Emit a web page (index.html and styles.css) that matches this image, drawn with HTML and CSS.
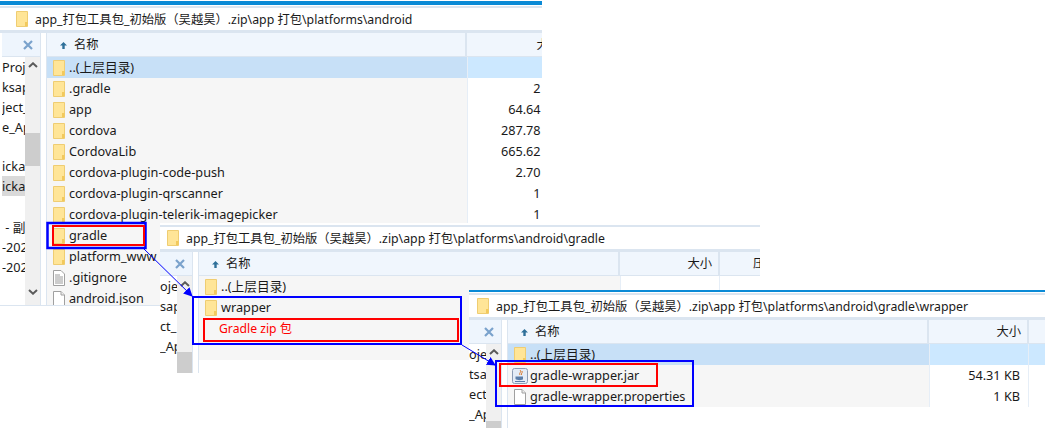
FILE: index.html
```html
<!DOCTYPE html>
<html lang="en">
<head>
    <meta charset="UTF-8">
    <title>Gradle wrapper</title>
    <link rel="stylesheet" href="styles.css">
</head>
<body>
    <svg class="defs" width="0" height="0">
        <symbol id="folder" viewBox="0 0 12 16">
            <path d="M.5.5H11.5V15.5H.5Z" fill="#ffe597" stroke="#efcd72"/>
            <path d="M9 15V11H11.5V15Z" fill="#f2c95c"/>
        </symbol>
        <symbol id="doc" viewBox="0 0 12 16">
            <path d="M.5.5H8L11.5 4V15.5H.5Z" fill="#fff" stroke="#a0a0a0"/>
            <path d="M8 .5V4H11.5" fill="#eee" stroke="#a0a0a0"/>
        </symbol>
        <symbol id="textdoc" viewBox="0 0 12 16">
            <path d="M.5.5H8L11.5 4V15.5H.5Z" fill="#fff" stroke="#a0a0a0"/>
            <path d="M2 5H7M2 7H10M2 9H10M2 11H10M2 13H10" stroke="#9a9a9a"/>
        </symbol>
        <symbol id="jar" viewBox="0 0 16 16">
            <rect x=".5" y=".5" width="15" height="15" rx="2" fill="#e4ecf6" stroke="#8c9cb4"/>
            <path d="M8 2C10 4 6.500 5 8 7M10 3C11 5 8.500 5.500 9.500 7" fill="none" stroke="#d9782a"/>
            <path d="M3.500 8.500H11V11C11 12.500 4.500 12.500 3.500 11Z" fill="#5c7ea8"/>
            <path d="M3 13.500H13" stroke="#5c7ea8"/>
        </symbol>
        <symbol id="cross" viewBox="0 0 10 10">
            <path d="M1 1L9 9M9 1L1 9" fill="none" stroke="#7aa2cc" stroke-width="2.200"/>
        </symbol>
        <symbol id="chevron" viewBox="0 0 10 6">
            <path d="M1 5L5 1.300L9 5" fill="none" stroke="#5a5a5a" stroke-width="2"/>
        </symbol>
        <symbol id="sort" viewBox="0 0 7 7">
            <path d="M3.500 0L7 3.500H4.700V7H2.300V3.500H0Z" fill="#2f7099"/>
        </symbol>
    </svg>

    <div class="window win-root">
        <div class="title-bar"></div>
        <div class="address">
            <svg class="address-icon"><use href="#folder"/></svg>
            <span>app_打包工具包_初始版（吴越昊）.zip\app 打包\platforms\android</span>
        </div>
        <div class="body">
            <div class="pane">
                <div class="pane-head"><svg class="close"><use href="#cross"/></svg></div>
                <div class="pane-main">
                    <div class="tree">
                        <div class="tree-line">Proje</div>
                        <div class="tree-line">ksap</div>
                        <div class="tree-line">ject_</div>
                        <div class="tree-line">e_Ap</div>
                        <div class="tree-line tree-gap">icka</div>
                        <div class="tree-line current">icka</div>
                        <div class="tree-line tree-gap2">&nbsp;- 副</div>
                        <div class="tree-line">-202</div>
                        <div class="tree-line">-202</div>
                    </div>
                    <div class="scrollbar scroll-root">
                        <svg class="chev"><use href="#chevron"/></svg>
                        <div class="thumb"></div>
                        <svg class="chev down"><use href="#chevron"/></svg>
                    </div>
                </div>
            </div>
            <div class="main">
                <div class="head">
                    <div class="head-name"><svg class="sort"><use href="#sort"/></svg>名称</div>
                    <div class="head-size">大小</div>
                </div>
                <div class="row selected"><div class="name"><svg class="icon"><use href="#folder"/></svg>..(上层目录)</div><div class="size"></div></div>
                <div class="row"><div class="name"><svg class="icon"><use href="#folder"/></svg>.gradle</div><div class="size">2 KB</div></div>
                <div class="row"><div class="name"><svg class="icon"><use href="#folder"/></svg>app</div><div class="size">64.64 KB</div></div>
                <div class="row"><div class="name"><svg class="icon"><use href="#folder"/></svg>cordova</div><div class="size">287.78 KB</div></div>
                <div class="row"><div class="name"><svg class="icon"><use href="#folder"/></svg>CordovaLib</div><div class="size">665.62 KB</div></div>
                <div class="row"><div class="name"><svg class="icon"><use href="#folder"/></svg>cordova-plugin-code-push</div><div class="size">2.70 KB</div></div>
                <div class="row"><div class="name"><svg class="icon"><use href="#folder"/></svg>cordova-plugin-qrscanner</div><div class="size">1 KB</div></div>
                <div class="row"><div class="name"><svg class="icon"><use href="#folder"/></svg>cordova-plugin-telerik-imagepicker</div><div class="size">1 KB</div></div>
                <div class="row"><div class="name"><svg class="icon"><use href="#folder"/></svg>gradle</div><div class="size"></div></div>
                <div class="row"><div class="name"><svg class="icon"><use href="#folder"/></svg>platform_www</div><div class="size"></div></div>
                <div class="row"><div class="name"><svg class="icon"><use href="#textdoc"/></svg>.gitignore</div><div class="size"></div></div>
                <div class="row"><div class="name"><svg class="icon"><use href="#doc"/></svg>android.json</div><div class="size"></div></div>
            </div>
        </div>
    </div>

    <div class="window win-gradle">
        <div class="address">
            <svg class="address-icon"><use href="#folder"/></svg>
            <span>app_打包工具包_初始版（吴越昊）.zip\app 打包\platforms\android\gradle</span>
        </div>
        <div class="body">
            <div class="pane">
                <div class="pane-head"><svg class="close"><use href="#cross"/></svg></div>
                <div class="pane-main">
                    <div class="tree">
                        <div class="tree-line">oje</div>
                        <div class="tree-line">sap</div>
                        <div class="tree-line">ct_</div>
                        <div class="tree-line">_Ap</div>
                    </div>
                    <div class="scrollbar scroll-gradle">
                        <svg class="chev"><use href="#chevron"/></svg>
                        <div class="thumb"></div>
                    </div>
                </div>
            </div>
            <div class="main">
                <div class="head">
                    <div class="head-name"><svg class="sort"><use href="#sort"/></svg>名称</div>
                    <div class="head-size">大小</div>
                    <div class="head-more">压缩</div>
                </div>
                <div class="row"><div class="name"><svg class="icon"><use href="#folder"/></svg>..(上层目录)</div><div class="size"></div><div class="more"></div></div>
                <div class="row"><div class="name"><svg class="icon"><use href="#folder"/></svg>wrapper</div><div class="size"></div><div class="more"></div></div>
                <div class="row"><div class="name note">Gradle zip 包</div><div class="size"></div><div class="more"></div></div>
                <div class="row"><div class="name"></div><div class="size"></div><div class="more"></div></div>
            </div>
        </div>
    </div>

    <div class="window win-wrapper">
        <div class="title-bar thin"></div>
        <div class="address">
            <svg class="address-icon"><use href="#folder"/></svg>
            <span>app_打包工具包_初始版（吴越昊）.zip\app 打包\platforms\android\gradle\wrapper</span>
        </div>
        <div class="body">
            <div class="pane">
                <div class="pane-head"><svg class="close"><use href="#cross"/></svg></div>
                <div class="pane-main">
                    <div class="tree">
                        <div class="tree-line">oje</div>
                        <div class="tree-line">tsap</div>
                        <div class="tree-line">ect_</div>
                        <div class="tree-line">_Ap</div>
                    </div>
                    <div class="scrollbar scroll-wrapper">
                        <svg class="chev"><use href="#chevron"/></svg>
                        <div class="thumb"></div>
                    </div>
                </div>
            </div>
            <div class="main">
                <div class="head">
                    <div class="head-name"><svg class="sort"><use href="#sort"/></svg>名称</div>
                    <div class="head-size">大小</div>
                    <div class="head-more"></div>
                </div>
                <div class="row selected"><div class="name"><svg class="icon"><use href="#folder"/></svg>..(上层目录)</div><div class="size"></div><div class="more"></div></div>
                <div class="row"><div class="name"><svg class="icon-jar"><use href="#jar"/></svg>gradle-wrapper.jar</div><div class="size">54.31 KB</div><div class="more"></div></div>
                <div class="row"><div class="name"><svg class="icon"><use href="#doc"/></svg>gradle-wrapper.properties</div><div class="size">1 KB</div><div class="more"></div></div>
            </div>
        </div>
    </div>

    <svg class="marks" width="1045" height="428">
        <defs>
            <marker id="head" markerWidth="9" markerHeight="9" refX="8" refY="4.500" orient="auto">
                <path d="M0 0L9 4.500L0 9Z" fill="#0000ff"/>
            </marker>
        </defs>
        <g fill="none">
            <rect x="47.500" y="223" width="98" height="25" stroke="#0000ff" stroke-width="2.500"/>
            <rect x="53" y="226" width="91" height="19" stroke="#ff0000" stroke-width="2"/>
            <rect x="193" y="297" width="268" height="47" stroke="#0000ff" stroke-width="2"/>
            <rect x="204" y="319" width="254" height="22" stroke="#ff0000" stroke-width="2"/>
            <rect x="496" y="361" width="197" height="45" stroke="#0000ff" stroke-width="2"/>
            <rect x="500" y="364" width="157" height="22" stroke="#ff0000" stroke-width="2"/>
            <path d="M144 249L192 296" stroke="#0000ff" marker-end="url(#head)"/>
            <path d="M462 345L495 365" stroke="#0000ff" marker-end="url(#head)"/>
        </g>
    </svg>
</body>
</html>
```

FILE: styles.css
```css
body {
    margin: 0;
    width: 1045px;
    height: 428px;
    overflow: hidden;
    position: relative;
    background-color: #ffffff;
    color: #1a1a1a;
    font-family: "Noto Sans", "Noto Sans CJK SC", sans-serif;
    font-size: 12.7px;
}
.defs {
    position: absolute;
}
.window {
    position: absolute;
    display: flex;
    flex-direction: column;
    overflow: hidden;
    background-color: #ffffff;
}
.win-root {
    left: 0;
    top: 0;
    width: 542px;
    height: 306px;
    padding-top: 1px;
    box-sizing: border-box;
    border-bottom: 1px solid #dbe5f0;
}
.win-gradle {
    left: 160px;
    top: 223px;
    width: 600px;
    height: 150px;
    padding-top: 2px;
    box-sizing: border-box;
}
.win-wrapper {
    left: 469px;
    top: 290px;
    width: 576px;
    height: 138px;
}
.title-bar {
    height: 4px;
    margin-bottom: 1px;
    background-color: #0a8ad6;
}
.title-bar.thin {
    height: 2px;
    margin-bottom: 1px;
}
.address {
    display: flex;
    align-items: center;
    flex: none;
    gap: 7px;
    height: 22px;
    padding-left: 16px;
    border-top: 2px solid #dbe5f0;
    border-bottom: 3px solid #dbe5f0;
    font-size: 12.3px;
    white-space: nowrap;
}
.win-gradle .address {
    padding-left: 7px;
}
.win-wrapper .address {
    padding-left: 8px;
}
.address-icon {
    width: 12px;
    height: 16px;
    flex: none;
}
.body {
    display: flex;
    flex: 1;
    min-height: 0;
}
.pane {
    display: flex;
    flex-direction: column;
    flex: none;
    width: 38px;
    margin-left: 2px;
    border-right: 1px solid #dbe5f0;
}
.win-gradle .pane,
.win-wrapper .pane {
    width: 32px;
    margin-left: 0;
}
.pane-head {
    display: flex;
    justify-content: flex-end;
    align-items: center;
    flex: none;
    height: 23px;
    padding-right: 7px;
    background-color: #eef5fd;
    border-bottom: 1px solid #dbe5f0;
}
.close {
    width: 10px;
    height: 10px;
}
.pane-main {
    display: flex;
    flex: 1;
    min-height: 0;
}
.tree {
    flex: none;
    width: 23px;
    overflow: hidden;
}
.win-gradle .tree,
.win-wrapper .tree {
    width: 17px;
}
.tree-line {
    height: 20px;
    line-height: 20px;
    white-space: nowrap;
    overflow: hidden;
}
.tree-line.tree-gap {
    margin-top: 19px;
}
.tree-line.tree-gap2 {
    margin-top: 21px;
}
.current {
    background-color: #d9d9d9;
}
.scrollbar {
    display: flex;
    flex-direction: column;
    align-items: center;
    flex: none;
    width: 15px;
    background-color: #f0f0f0;
}
.scroll-root .thumb {
    height: 33px;
    margin-top: 59px;
}
.scroll-gradle .thumb {
    height: 21px;
    margin-top: 59px;
}
.scroll-wrapper .thumb {
    height: 20px;
    margin-top: 60px;
}
.thumb {
    width: 15px;
    flex: none;
    background-color: #cdcdcd;
}
.chev {
    width: 10px;
    height: 6px;
    flex: none;
    margin-top: 5px;
    margin-bottom: 6px;
}
.chev.down {
    margin-top: auto;
    margin-bottom: 10px;
    transform: rotate(180deg);
}
.main {
    flex: 1;
    min-width: 0;
    margin-left: 5px;
    border-left: 1px solid #dbe5f0;
}
.head {
    display: flex;
    height: 23px;
    line-height: 24px;
    background-color: #f0f6fd;
    border-bottom: 1px solid #dbe5f0;
    font-size: 12.3px;
}
.head-name {
    display: flex;
    align-items: center;
    gap: 7px;
    flex: none;
    width: 420px;
    box-sizing: border-box;
    padding-top: 1px;
    padding-left: 13px;
    border-right: 2px solid #dbe5f0;
}
.win-gradle .head-name,
.win-gradle .name,
.win-wrapper .head-name,
.win-wrapper .name {
    width: 421px;
}
.sort {
    width: 7px;
    height: 7px;
    flex: none;
}
.head-size {
    flex: none;
    width: 100px;
    box-sizing: border-box;
    padding-right: 6px;
    text-align: right;
    border-right: 2px solid #dbe5f0;
}
.win-root .head-size {
    padding-right: 4px;
}
.head-more {
    flex: 1;
    padding-left: 33px;
    white-space: nowrap;
}
.row {
    display: flex;
    width: 640px;
    height: 21px;
    line-height: 21px;
}
.name {
    display: flex;
    align-items: center;
    gap: 4px;
    flex: none;
    width: 420px;
    box-sizing: border-box;
    padding-left: 6px;
    background-color: #f6f6f6;
    white-space: nowrap;
}
.name.note {
    padding-left: 20px;
    color: #ff0000;
    font-size: 12.2px;
}
.icon {
    width: 12px;
    height: 16px;
    flex: none;
}
.icon-jar {
    width: 16px;
    height: 16px;
    flex: none;
    margin-left: -2px;
    margin-right: -2px;
}
.size {
    flex: none;
    width: 100px;
    box-sizing: border-box;
    padding-right: 8px;
    text-align: right;
    border-left: 1px solid #e6eef7;
    border-right: 1px solid #e6eef7;
}
.win-root .size {
    padding-right: 6px;
}
.more {
    flex: 1;
}
.selected .name {
    background-color: #c7e0f7;
}
.selected .size,
.selected .more {
    background-color: #cce8ff;
}
.marks {
    position: absolute;
    left: 0;
    top: 0;
}
```
